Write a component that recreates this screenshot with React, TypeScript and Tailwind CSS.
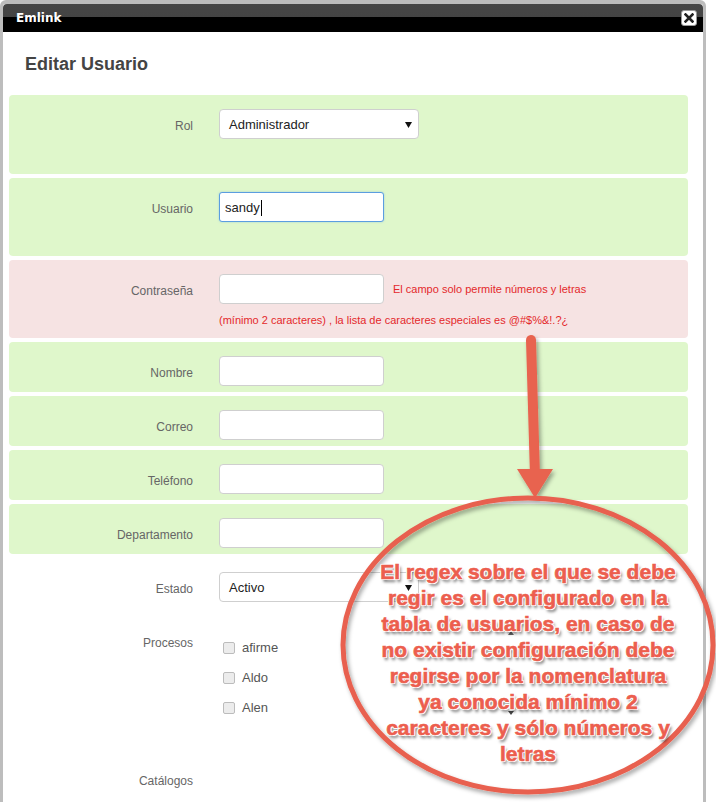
import React from 'react';

const Label: React.FC<{ text: string }> = ({ text }) => (
  <div className="w-[184px] shrink-0 pt-[10px] text-right text-[12px] leading-[15px] text-[#666]">{text}</div>
);

const TextBox: React.FC<{ focused?: boolean; value?: string }> = ({ focused, value }) => (
  <div
    className={
      focused
        ? 'flex h-[30px] w-[165px] items-center rounded-[3px] border border-[#5b9de0] bg-white pl-[5px] pt-[1px] text-[13px] text-[#222] shadow-[0_0_2px_rgba(102,175,233,0.6)]'
        : 'flex h-[30px] w-[165px] items-center rounded-[4px] border border-[#cfcfcf] bg-white pl-[5px] text-[13px] text-[#222]'
    }
  >
    {value}
    {focused && <span className="ml-[1px] h-[16px] w-[1px] bg-black" />}
  </div>
);

const Select: React.FC<{ value: string }> = ({ value }) => (
  <div className="flex h-[30px] w-[200px] items-center justify-between rounded-[4px] border border-[#cfcfcf] bg-white pl-[9px] pr-[6px] pt-[2px] text-[13px] text-[#222]">
    <span>{value}</span>
    <svg width="7" height="6" viewBox="0 0 7 6">
      <path d="M0 0 H7 L3.5 6 Z" fill="#111" />
    </svg>
  </div>
);

const Row: React.FC<{ label: string; tone?: 'green' | 'pink' | 'none'; h: string; children?: React.ReactNode }> = ({
  label,
  tone = 'green',
  h,
  children,
}) => {
  const bg = tone === 'green' ? 'bg-[#dff7cb]' : tone === 'pink' ? 'bg-[#f6e3e3]' : '';
  return (
    <div className={`flex rounded-[4px] pt-[14px] ${bg} ${h}`}>
      <Label text={label} />
      <div className="ml-[26px]">{children}</div>
    </div>
  );
};

const Check: React.FC<{ text: string }> = ({ text }) => (
  <div className="flex h-[30px] items-center">
    <span className="h-[12px] w-[12px] rounded-[2px] border border-[#bcbcbc] bg-[#ececec]" />
    <span className="ml-[7px] text-[13px] text-[#555]">{text}</span>
  </div>
);

export default function App() {
  return (
    <div className="relative h-[802px] w-[716px] overflow-hidden bg-white font-['Liberation_Sans',Arial,sans-serif]">
      <div className="h-[802px] w-[706px] rounded-t-[6px] border-x-[3px] border-t-[4px] border-[#bdbdbd] bg-white">
        {/* title bar */}
        <div className="flex h-[28px] items-center justify-between rounded-t-[4px] bg-[linear-gradient(to_bottom,#464646_0,#444_47%,#000_47%,#000_100%)] pl-[13px] pr-[6px]">
          <span className="font-['DejaVu_Sans',sans-serif] text-[12px] font-bold text-white">Emlink</span>
          <div className="flex h-[16px] w-[16px] items-center justify-center rounded-[3px] border border-[#999] bg-white">
            <svg width="10" height="10" viewBox="0 0 10 10">
              <path d="M1.5 1.5 L8.5 8.5 M8.5 1.5 L1.5 8.5" stroke="#222" strokeWidth="2.6" strokeLinecap="square" />
            </svg>
          </div>
        </div>

        <h2 className="ml-[22px] mt-[22px] text-[18px] font-bold leading-[20px] text-[#444]">Editar Usuario</h2>

        <div className="ml-[6px] mt-[21px] flex w-[679px] flex-col gap-[4px]">
          <Row label="Rol" h="h-[79px]">
            <Select value="Administrador" />
          </Row>
          <Row label="Usuario" h="h-[78px]">
            <TextBox focused value="sandy" />
          </Row>
          <Row label="Contraseña" tone="pink" h="h-[78px]">
            <div className="flex items-center">
              <TextBox />
              <span className="ml-[9px] text-[11px] text-[#e4292b]">El campo solo permite números y letras</span>
            </div>
            <div className="mt-[9px] text-[11px] leading-[14px] text-[#e4292b]">
              (mínimo 2 caracteres) , la lista de caracteres especiales es @#$%&!.?¿
            </div>
          </Row>
          <Row label="Nombre" h="h-[50px]">
            <TextBox />
          </Row>
          <Row label="Correo" h="h-[50px]">
            <TextBox />
          </Row>
          <Row label="Teléfono" h="h-[50px]">
            <TextBox />
          </Row>
          <Row label="Departamento" h="h-[50px]">
            <TextBox />
          </Row>
          <Row label="Estado" tone="none" h="h-[50px]">
            <Select value="Activo" />
          </Row>
          <Row label="Procesos" tone="none" h="h-[134px]">
            <div className="mt-[7px] pl-[4px]">
              <Check text="afirme" />
              <Check text="Aldo" />
              <Check text="Alen" />
            </div>
          </Row>
          <Row label="Catálogos" tone="none" h="h-[40px]" />
        </div>
      </div>

      {/* annotation overlay */}
      <svg className="pointer-events-none absolute left-0 top-0" width="716" height="802" viewBox="0 0 716 802">
        <defs>
          <filter id="sh" x="-10%" y="-10%" width="120%" height="120%">
            <feDropShadow dx="2" dy="3" stdDeviation="2" floodColor="#000" floodOpacity="0.35" />
          </filter>
        </defs>
        <path d="M508 635 l3 -4 l3 4 Z" fill="#666" />
        <path d="M508 711 l3 4 l3 -4 Z" fill="#444" />
        <g filter="url(#sh)">
          <line x1="531" y1="340" x2="535" y2="476" stroke="#e8634f" strokeWidth="10" strokeLinecap="round" />
          <path d="M517 469 L553 469 L535 498 Z" fill="#e8634f" />
          <ellipse cx="528" cy="645" rx="185" ry="147" fill="none" stroke="#e8604f" strokeWidth="5" />
        </g>
      </svg>
      <div className="pointer-events-none absolute left-[343px] top-[559px] w-[370px] text-center text-[21px] font-bold leading-[26px] text-[#ec5e4e] [-webkit-text-stroke:0.6px_#ec5e4e] [text-shadow:1px_1px_0_#fff,-1px_-1px_0_#fff,1px_-1px_0_#fff,-1px_1px_0_#fff,0_1px_0_#fff,1px_0_0_#fff,0_-1px_0_#fff,-1px_0_0_#fff,2px_3px_3px_rgba(0,0,0,0.55)]">
        El regex sobre el que se debe
        <br />
        regir es el configurado en la
        <br />
        tabla de usuarios, en caso de
        <br />
        no existir configuración debe
        <br />
        regirse por la nomenclatura
        <br />
        ya conocida mínimo 2
        <br />
        caracteres y sólo números y
        <br />
        letras
      </div>
    </div>
  );
}
